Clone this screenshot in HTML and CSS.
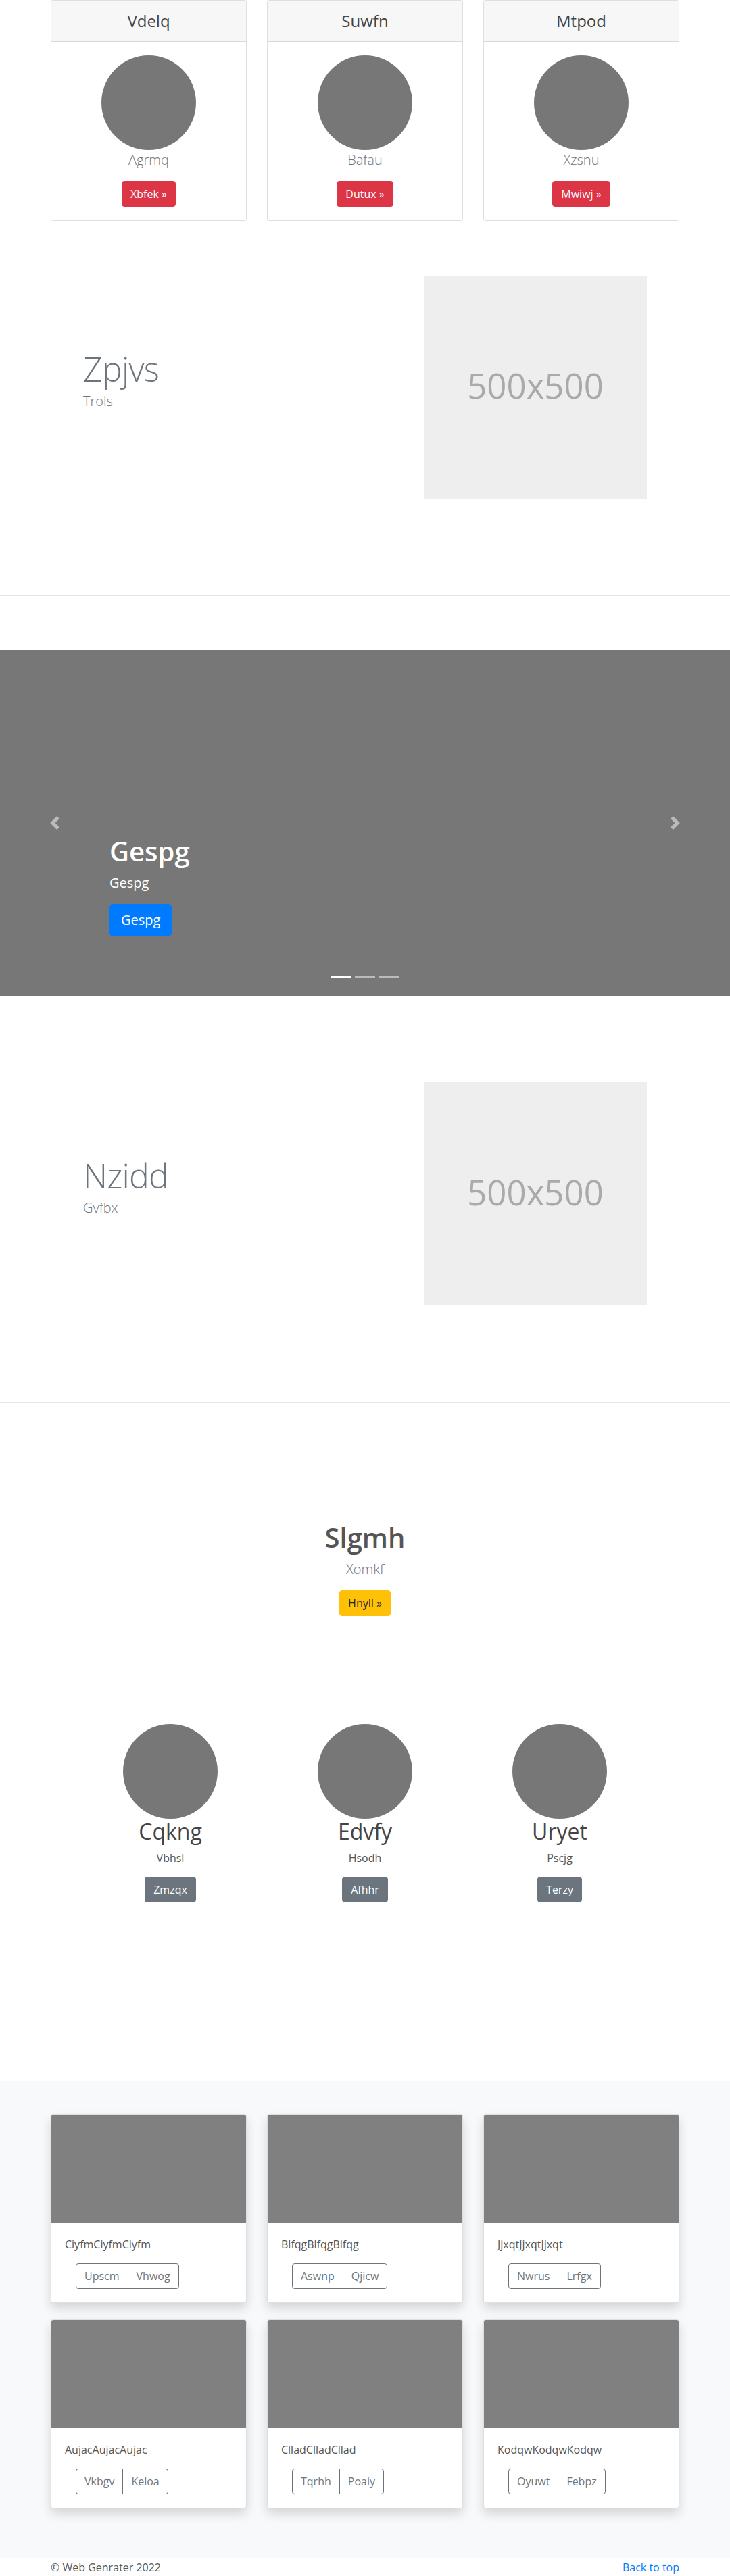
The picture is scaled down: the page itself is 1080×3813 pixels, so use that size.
FILE: index.html
```html
<!DOCTYPE html>
<html lang="en">
<head>
<meta charset="utf-8">
<title>Web Genrater</title>
<link rel="stylesheet" href="styles.css">
</head>
<body>

<section class="container pricing">
  <div class="deck">
    <div class="price-card">
      <div class="price-card-header"><h4>Vdelq</h4></div>
      <div class="price-card-body">
        <div class="avatar"></div>
        <p class="price-lead">Agrmq</p>
        <a class="btn btn-danger" href="#">Xbfek &raquo;</a>
      </div>
    </div>
    <div class="price-card">
      <div class="price-card-header"><h4>Suwfn</h4></div>
      <div class="price-card-body">
        <div class="avatar"></div>
        <p class="price-lead">Bafau</p>
        <a class="btn btn-danger" href="#">Dutux &raquo;</a>
      </div>
    </div>
    <div class="price-card">
      <div class="price-card-header"><h4>Mtpod</h4></div>
      <div class="price-card-body">
        <div class="avatar"></div>
        <p class="price-lead">Xzsnu</p>
        <a class="btn btn-danger" href="#">Mwiwj &raquo;</a>
      </div>
    </div>
  </div>
</section>

<section class="container-narrow featurette featurette-first">
  <div class="featurette-text">
    <h2 class="featurette-heading">Zpjvs</h2>
    <p class="featurette-lead">Trols</p>
  </div>
  <div class="placeholder">500x500</div>
</section>

<hr class="divider">

<section class="carousel">
  <ol class="carousel-indicators">
    <li class="active"></li>
    <li></li>
    <li></li>
  </ol>
  <a class="carousel-control prev" href="#">
    <svg width="20" height="20" viewBox="0 0 8 8"><path fill="#fff" d="M5.25 0l-4 4 4 4 1.5-1.5L4.25 4l2.5-2.5L5.25 0z"/></svg>
  </a>
  <a class="carousel-control next" href="#">
    <svg width="20" height="20" viewBox="0 0 8 8"><path fill="#fff" d="M2.75 0l-1.5 1.5L3.75 4l-2.5 2.5L2.75 8l4-4-4-4z"/></svg>
  </a>
  <div class="carousel-caption">
    <h1>Gespg</h1>
    <p>Gespg</p>
    <a class="btn btn-lg btn-primary" href="#">Gespg</a>
  </div>
</section>

<section class="container-narrow featurette featurette-second">
  <div class="featurette-text">
    <h2 class="featurette-heading">Nzidd</h2>
    <p class="featurette-lead">Gvfbx</p>
  </div>
  <div class="placeholder">500x500</div>
</section>

<hr class="divider">

<section class="jumbo">
  <h1>Slgmh</h1>
  <p class="jumbo-lead">Xomkf</p>
  <a class="btn btn-warning" href="#">Hnyll &raquo;</a>
</section>

<section class="marketing">
  <div class="marketing-col">
    <div class="avatar"></div>
    <h2>Cqkng</h2>
    <p>Vbhsl</p>
    <a class="btn btn-secondary" href="#">Zmzqx</a>
  </div>
  <div class="marketing-col">
    <div class="avatar"></div>
    <h2>Edvfy</h2>
    <p>Hsodh</p>
    <a class="btn btn-secondary" href="#">Afhhr</a>
  </div>
  <div class="marketing-col">
    <div class="avatar"></div>
    <h2>Uryet</h2>
    <p>Pscjg</p>
    <a class="btn btn-secondary" href="#">Terzy</a>
  </div>
</section>

<hr class="divider">

<section class="album">
  <div class="container album-grid">
    <div class="album-card">
      <div class="album-img"></div>
      <div class="album-body">
        <p>CiyfmCiyfmCiyfm</p>
        <div class="btn-group"><a class="btn btn-outline" href="#">Upscm</a><a class="btn btn-outline" href="#">Vhwog</a></div>
      </div>
    </div>
    <div class="album-card">
      <div class="album-img"></div>
      <div class="album-body">
        <p>BlfqgBlfqgBlfqg</p>
        <div class="btn-group"><a class="btn btn-outline" href="#">Aswnp</a><a class="btn btn-outline" href="#">Qjicw</a></div>
      </div>
    </div>
    <div class="album-card">
      <div class="album-img"></div>
      <div class="album-body">
        <p>JjxqtJjxqtJjxqt</p>
        <div class="btn-group"><a class="btn btn-outline" href="#">Nwrus</a><a class="btn btn-outline" href="#">Lrfgx</a></div>
      </div>
    </div>
    <div class="album-card">
      <div class="album-img"></div>
      <div class="album-body">
        <p>AujacAujacAujac</p>
        <div class="btn-group"><a class="btn btn-outline" href="#">Vkbgv</a><a class="btn btn-outline" href="#">Keloa</a></div>
      </div>
    </div>
    <div class="album-card">
      <div class="album-img"></div>
      <div class="album-body">
        <p>ClladClladCllad</p>
        <div class="btn-group"><a class="btn btn-outline" href="#">Tqrhh</a><a class="btn btn-outline" href="#">Poaiy</a></div>
      </div>
    </div>
    <div class="album-card">
      <div class="album-img"></div>
      <div class="album-body">
        <p>KodqwKodqwKodqw</p>
        <div class="btn-group"><a class="btn btn-outline" href="#">Oyuwt</a><a class="btn btn-outline" href="#">Febpz</a></div>
      </div>
    </div>
  </div>
</section>

<footer class="container footer">
  <p>&copy; Web Genrater 2022</p>
  <a href="#" class="back-top">Back to top</a>
</footer>

</body>
</html>
```

FILE: styles.css
```css
* { box-sizing: border-box; }
html, body { margin: 0; padding: 0; }
body {
  width: 1080px;
  font-family: "Open Sans", "Noto Sans", "Liberation Sans", sans-serif;
  font-size: 16px;
  line-height: 1.5;
  color: #212529;
  background: #fff;
}
h1, h2, h4, p { margin: 0; }
a { text-decoration: none; }

.container { width: 960px; margin: 0 auto; padding: 0 15px; }
.container-narrow { width: 864px; margin: 0 auto; padding: 0 15px; }

/* buttons */
.btn {
  display: inline-block;
  font-size: 16px;
  line-height: 24px;
  padding: 6px 12px;
  border: 1px solid transparent;
  border-radius: 4px;
  font-weight: 400;
  text-align: center;
}
.btn-lg { font-size: 20px; line-height: 30px; padding: 8px 16px; border-radius: 5px; }
.btn-danger { background: #dc3545; border-color: #dc3545; color: #fff; }
.btn-primary { background: #007bff; border-color: #007bff; color: #fff; }
.btn-warning { background: #ffc107; border-color: #ffc107; color: #212529; }
.btn-secondary { background: #6c757d; border-color: #6c757d; color: #fff; }
.btn-outline { background: transparent; border-color: #6c757d; color: #6c757d; }

/* pricing cards */
.deck { display: grid; grid-template-columns: repeat(3, 1fr); column-gap: 30px; }
.price-card {
  border: 1px solid rgba(0,0,0,.125);
  border-radius: 4px;
  background: #fff;
  text-align: center;
  overflow: hidden;
}
.price-card-header {
  background: rgba(0,0,0,.03);
  border-bottom: 1px solid rgba(0,0,0,.125);
  padding: 12px 20px;
}
.price-card-header h4 { font-size: 24px; line-height: 36px; font-weight: 400; color: #444; }
.price-card-body { padding: 20px; display: flex; flex-direction: column; align-items: center; }
.avatar { width: 140px; height: 140px; border-radius: 50%; background: #777; }
.price-lead { font-size: 20px; line-height: 30px; font-weight: 300; color: #6c757d; margin-bottom: 16px; }

/* featurettes */
.featurette {
  display: grid;
  grid-template-columns: 1fr 330px;
  column-gap: 45px;
  align-items: center;
  padding-bottom: 63px;
}
.featurette-first { padding-top: 81px; }
.featurette-second { padding-top: 128px; }
.featurette-heading {
  font-size: 50px;
  line-height: 1;
  font-weight: 300;
  letter-spacing: -0.8px;
  color: #6c757d;
  margin-bottom: 8px;
}
.featurette-lead { font-size: 20px; line-height: 30px; font-weight: 300; color: #6c757d; margin-bottom: 16px; }
.placeholder {
  width: 330px;
  height: 330px;
  background: #eee;
  color: #aaa;
  font-size: 51px;
  line-height: 1;
  padding-bottom: 6px;
  display: flex;
  align-items: center;
  justify-content: center;
}

.divider { margin: 80px 0; border: 0; border-top: 1px solid rgba(0,0,0,.1); height: 0; }

/* carousel */
.carousel { position: relative; height: 512px; background: #777; overflow: hidden; }
.carousel-indicators {
  position: absolute;
  left: 0; right: 0; bottom: 26px;
  margin: 0; padding: 0;
  list-style: none;
  display: flex;
  justify-content: center;
  gap: 6px;
}
.carousel-indicators li { width: 30px; height: 3px; background: rgba(255,255,255,.5); }
.carousel-indicators li.active { background: #fff; }
.carousel-control {
  position: absolute;
  top: 0; bottom: 0;
  width: 15%;
  display: flex;
  align-items: center;
  justify-content: center;
  opacity: .5;
}
.carousel-control.prev { left: 0; }
.carousel-control.next { right: 0; }
.carousel-control svg { display: block; }
.carousel-caption {
  position: absolute;
  left: 15%; right: 15%;
  bottom: 72px;
  color: #fff;
  display: flex;
  flex-direction: column;
  align-items: flex-start;
}
.carousel-caption h1 { font-size: 40px; line-height: 48px; font-weight: 600; margin-bottom: 8px; }
.carousel-caption p { font-size: 20px; line-height: 30px; margin-bottom: 16px; }
.carousel-caption .btn { margin-bottom: 16px; }

/* jumbo */
.jumbo { padding-top: 96px; text-align: center; display: flex; flex-direction: column; align-items: center; }
.jumbo h1 { font-size: 40px; line-height: 48px; font-weight: 600; color: #555; margin-bottom: 8px; }
.jumbo-lead { font-size: 20px; line-height: 30px; font-weight: 300; color: #6c757d; margin-bottom: 16px; }

/* marketing */
.marketing {
  width: 864px;
  margin: 160px auto 0;
  padding-bottom: 104px;
  display: grid;
  grid-template-columns: repeat(3, 1fr);
}
.marketing-col { display: flex; flex-direction: column; align-items: center; text-align: center; }
.marketing-col h2 { font-size: 32px; line-height: 38.4px; font-weight: 400; color: #444; margin-bottom: 8px; }
.marketing-col p { font-size: 16px; line-height: 24px; color: #555; margin-bottom: 16px; }

/* album */
.album { background: #f8f9fa; padding: 48px 0 74px; }
.album-grid { display: grid; grid-template-columns: repeat(3, 1fr); column-gap: 30px; row-gap: 24px; }
.album-card {
  background: #fff;
  border: 1px solid rgba(0,0,0,.125);
  border-radius: 4px;
  overflow: hidden;
  box-shadow: 0 8px 16px rgba(0,0,0,.15);
}
.album-img { height: 160px; background: #808080; }
.album-body { padding: 20px; }
.album-body p { font-size: 16px; line-height: 24px; color: #555; margin-bottom: 16px; }
.btn-group { display: inline-flex; margin-left: 16px; }
.btn-group .btn:first-child { border-top-right-radius: 0; border-bottom-right-radius: 0; }
.btn-group .btn + .btn { margin-left: -1px; border-top-left-radius: 0; border-bottom-left-radius: 0; }

/* footer */
.footer {
  height: 25px;
  padding-top: 1px;
  display: flex;
  justify-content: space-between;
  align-items: flex-start;
  color: #555;
  line-height: 24px;
}
.back-top { color: #007bff; }
```
